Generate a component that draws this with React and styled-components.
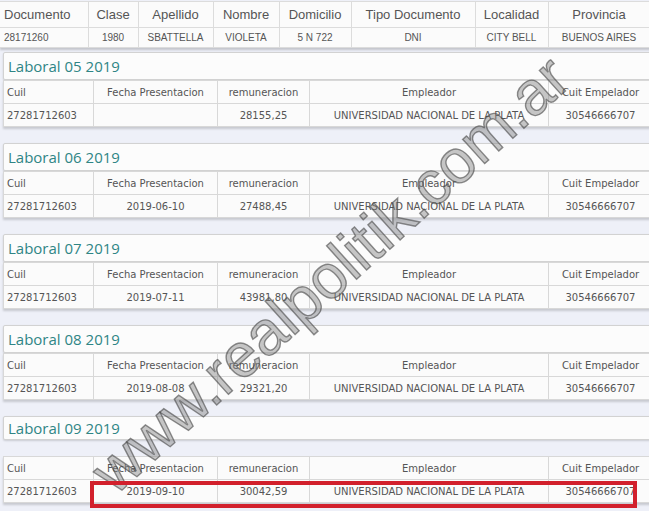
import React from "react";
import styled, { createGlobalStyle } from "styled-components";

const GlobalStyle = createGlobalStyle`
  body {
    margin: 0;
    background: #eef0f8;
    overflow: hidden;
  }
`;

const Page = styled.div`
  position: relative;
  width: 649px;
  height: 511px;
  overflow: hidden;
  background: #eef0f8;
`;

const PersonTable = styled.table`
  width: 650px;
  border-collapse: collapse;
  table-layout: fixed;
  background: #fbfbfb;
  margin-top: 1px;
  box-shadow: 0 2px 2px rgba(0, 0, 0, 0.18);
  font-family: "Liberation Sans", Arial, sans-serif;
  color: #555;

  th,
  td {
    border: 1px solid #dcdcdc;
    text-align: center;
    white-space: nowrap;
    overflow: hidden;
    padding: 0 4px;
  }
  th {
    height: 25px;
    font-size: 13px;
    font-weight: normal;
  }
  td {
    height: 19px;
    font-size: 10px;
  }
  th:first-child,
  td:first-child {
    text-align: left;
    border-left: none;
  }
`;

const Sections = styled.div`
  padding-left: 3px;
  display: flex;
  flex-direction: column;
  gap: 16px;
  margin-top: 4px;
`;

const Section = styled.div`
  display: flex;
  flex-direction: column;
  gap: ${(p) => (p.$split ? "16px" : "0")};
`;

const Heading = styled.div`
  height: ${(p) => (p.$short ? "24px" : "28px")};
  width: 660px;
  box-sizing: border-box;
  background: #fcfcfc;
  border: 1px solid #d2d2d2;
  border-radius: 2px;
  box-shadow: 0 1px 2px rgba(0, 0, 0, 0.15);
  padding-left: 4px;
  display: flex;
  align-items: center;
  font-family: "Open Sans", sans-serif;
  font-size: 15px;
  color: #2f8585;
`;

const WorkTable = styled.table`
  width: 649px;
  border-collapse: collapse;
  table-layout: fixed;
  background: #fbfbfb;
  box-shadow: 0 2px 2px rgba(0, 0, 0, 0.16);
  font-family: "DejaVu Sans", Verdana, sans-serif;
  font-size: 10px;
  color: #555;

  td {
    border: 1px solid #d8d8d8;
    height: 22px;
    padding: 0 3px;
    text-align: center;
    white-space: nowrap;
    overflow: hidden;
  }
  td:first-child {
    text-align: left;
  }
`;

const Watermark = styled.div`
  position: absolute;
  left: 330px;
  top: 274px;
  transform: translate(-50%, -50%) rotate(-42deg);
  font-family: "Liberation Sans", Arial, sans-serif;
  font-size: 62px;
  white-space: nowrap;
  color: rgba(130, 130, 130, 0.45);
  -webkit-text-stroke: 1.4px rgba(70, 70, 70, 0.6);
  pointer-events: none;
`;

const Highlight = styled.div`
  position: absolute;
  left: 90px;
  top: 481px;
  width: 547px;
  height: 27px;
  box-sizing: border-box;
  border: 4px solid #d2202c;
  pointer-events: none;
`;

const person = [
  ["Documento", "28171260", 88],
  ["Clase", "1980", 50],
  ["Apellido", "SBATTELLA", 75],
  ["Nombre", "VIOLETA", 66],
  ["Domicilio", "5 N 722", 72],
  ["Tipo Documento", "DNI", 124],
  ["Localidad", "CITY BELL", 73],
  ["Provincia", "BUENOS AIRES", 102],
];

const workCols = [90, 124, 92, 239, 104];
const workHead = ["Cuil", "Fecha Presentacion", "remuneracion", "Empleador", "Cuit Empelador"];

const periods = [
  { title: "Laboral 05 2019", fecha: "", monto: "28155,25" },
  { title: "Laboral 06 2019", fecha: "2019-06-10", monto: "27488,45" },
  { title: "Laboral 07 2019", fecha: "2019-07-11", monto: "43981,80" },
  { title: "Laboral 08 2019", fecha: "2019-08-08", monto: "29321,20" },
  { title: "Laboral 09 2019", fecha: "2019-09-10", monto: "30042,59", split: true },
];

export default function App() {
  return (
    <>
      <GlobalStyle />
      <Page>
        <PersonTable>
          <colgroup>
            {person.map(([h, , w]) => (
              <col key={h} style={{ width: w }} />
            ))}
          </colgroup>
          <thead>
            <tr>
              {person.map(([h]) => (
                <th key={h}>{h}</th>
              ))}
            </tr>
          </thead>
          <tbody>
            <tr>
              {person.map(([h, v]) => (
                <td key={h}>{v}</td>
              ))}
            </tr>
          </tbody>
        </PersonTable>

        <Sections>
          {periods.map((p) => (
            <Section key={p.title} $split={p.split}>
              <Heading $short={p.split}>{p.title}</Heading>
              <WorkTable>
                <colgroup>
                  {workCols.map((w, i) => (
                    <col key={i} style={{ width: w }} />
                  ))}
                </colgroup>
                <tbody>
                  <tr>
                    {workHead.map((h) => (
                      <td key={h}>{h}</td>
                    ))}
                  </tr>
                  <tr>
                    <td>27281712603</td>
                    <td>{p.fecha}</td>
                    <td>{p.monto}</td>
                    <td>UNIVERSIDAD NACIONAL DE LA PLATA</td>
                    <td>30546666707</td>
                  </tr>
                </tbody>
              </WorkTable>
            </Section>
          ))}
        </Sections>

        <Watermark>www.realpolitik.com.ar</Watermark>
        <Highlight />
      </Page>
    </>
  );
}
